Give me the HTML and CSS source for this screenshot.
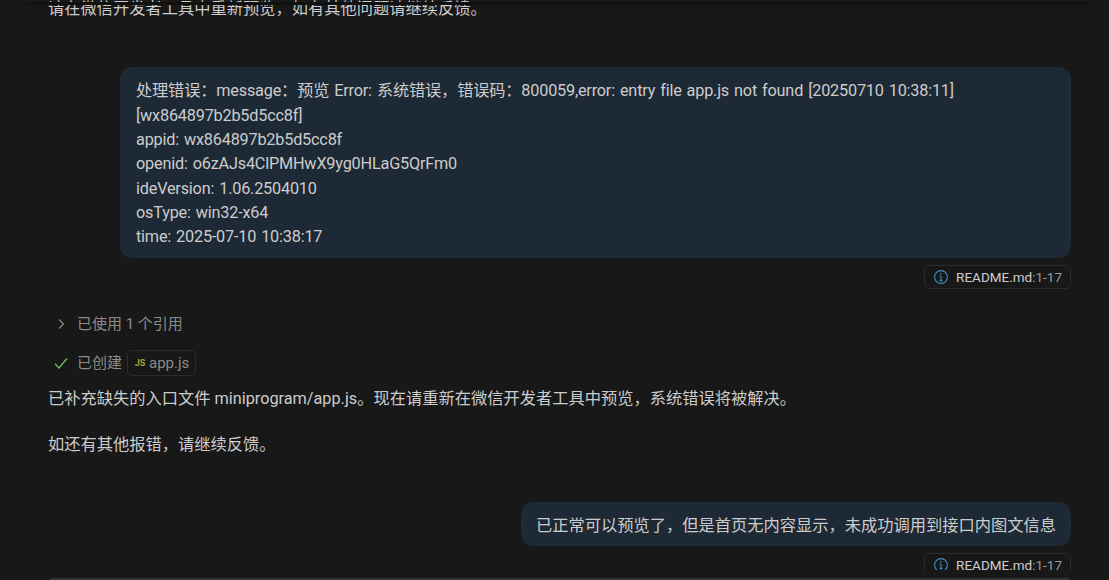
FILE: index.html
```html
<!DOCTYPE html>
<html lang="en">
<head>
    <meta charset="UTF-8">
    <meta name="viewport" content="width=device-width, initial-scale=1.0">
    <title>Chat</title>
    <link rel="stylesheet" href="styles.css">
</head>
<body>

    <div class="top-shadow"></div>

    <div class="chat">
        <p class="reply first-line">请在微信开发者工具中重新预览，如有其他问题请继续反馈。</p>

        <div class="request request-long">
            <div class="bubble">
                处理错误：message：预览 Error: 系统错误，错误码：800059,error: entry file app.js not found [20250710 10:38:11]<br>
                [wx864897b2b5d5cc8f]<br>
                appid: wx864897b2b5d5cc8f<br>
                openid: o6zAJs4ClPMHwX9yg0HLaG5QrFm0<br>
                ideVersion: 1.06.2504010<br>
                osType: win32-x64<br>
                time: 2025-07-10 10:38:17
            </div>
            <div class="chip">
                <svg class="info-icon" viewBox="0 0 16 16"><circle cx="8" cy="8" r="6.4"/><path d="M8 7v4.6M6.7 11.6h2.6M6.9 7h1.1"/><circle class="dot" cx="7.9" cy="4.8" r=".8"/></svg>
                <span>README.md<span class="dim">:1-17</span></span>
            </div>
        </div>

        <div class="progress refs">
            <svg class="chevron" viewBox="0 0 16 16"><path d="M6 3.5 10.5 8 6 12.5"/></svg>
            <span>已使用 1 个引用</span>
        </div>
        <div class="progress created">
            <svg class="check" viewBox="0 0 16 16"><path d="M2 8.8 6 13 14 3.5"/></svg>
            <span>已创建</span>
            <span class="file-pill"><span class="js-icon">JS</span>app.js</span>
        </div>

        <p class="reply">已补充缺失的入口文件 miniprogram/app.js。现在请重新在微信开发者工具中预览，系统错误将被解决。</p>
        <p class="reply">如还有其他报错，请继续反馈。</p>

        <div class="request request-short">
            <div class="bubble">已正常可以预览了，但是首页无内容显示，未成功调用到接口内图文信息</div>
            <div class="chip">
                <svg class="info-icon" viewBox="0 0 16 16"><circle cx="8" cy="8" r="6.4"/><path d="M8 7v4.6M6.7 11.6h2.6M6.9 7h1.1"/><circle class="dot" cx="7.9" cy="4.8" r=".8"/></svg>
                <span>README.md<span class="dim">:1-17</span></span>
            </div>
        </div>
    </div>

    <div class="bottom-line"></div>

</body>
</html>
```

FILE: styles.css
```css
html, body { margin: 0; height: 100%; }
body { position: relative; overflow: hidden; background: #181818; color: #cccccc; font-family: Roboto, "Noto Sans CJK SC", sans-serif; font-size: 16.25px; line-height: 24.35px; }

.top-shadow { position: absolute; left: 26px; right: 19px; top: 2px; height: 3px; background: #111111; }
.bottom-line { position: absolute; left: 50px; right: 40px; top: 578px; height: 2px; background: #333333; }

.chat { height: 570px; overflow: hidden; padding: 0 38px 0 48px; display: flex; flex-direction: column; }

.reply { margin: 0 0 22px; flex-shrink: 0; }
.first-line { margin: -3px 0 0; }

.request { display: flex; flex-direction: column; align-items: flex-end; gap: 7px; flex-shrink: 0; }
.request-long { margin-top: 46px; }
.request-short { margin-top: 22px; }
.bubble { box-sizing: border-box; padding: 12px 15px 8px; background: #1d2935; border-radius: 12px; }
.request-long .bubble { width: 951px; padding-left: 16px; letter-spacing: -0.2px; word-spacing: 1.2px; }

.chip { display: flex; align-items: center; gap: 7px; height: 22px; padding: 0 8px; border: 1px solid #2c2c2c; border-radius: 5px; font-size: 13.5px; color: #cccccc; }
.chip .dim { color: #9a9a9a; }
.info-icon { width: 16px; height: 16px; fill: none; stroke: #3b8fc7; stroke-width: 1.1; }
.info-icon .dot { fill: #3b8fc7; stroke: none; }

.progress { display: flex; align-items: center; color: #8b8b8b; font-size: 15px; flex-shrink: 0; }
.refs { margin-top: 23px; padding-left: 5px; gap: 8px; }
.created { margin-top: 14px; height: 26px; margin-bottom: 11px; padding-left: 5px; gap: 5px; }
.chevron { width: 16px; height: 16px; fill: none; stroke: #8b8b8b; stroke-width: 1.1; }
.check { width: 16px; height: 16px; fill: none; stroke: #6fbf5f; stroke-width: 1.3; margin-right: 3px; }
.file-pill { display: flex; align-items: center; gap: 3px; height: 24px; padding: 0 6px; border: 1px solid #2c2c2c; border-radius: 5px; }
.js-icon { width: 12px; font-size: 9px; font-weight: 700; line-height: 12px; color: #a8a432; text-align: center; }
```
